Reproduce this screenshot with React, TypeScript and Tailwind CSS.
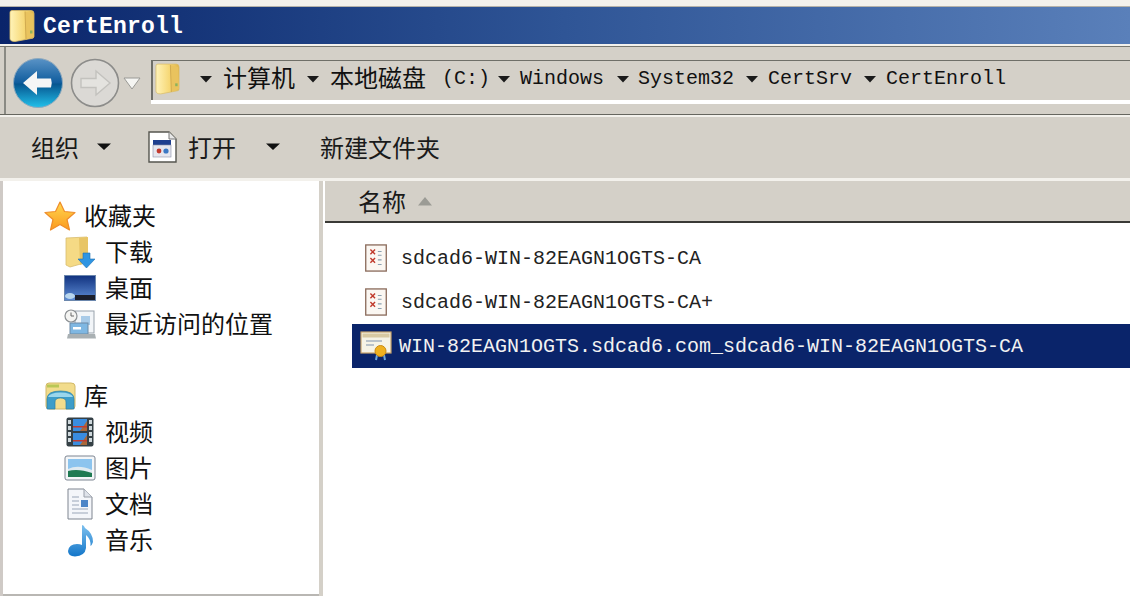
import React from 'react';

const cjk = '"Noto Sans CJK SC", sans-serif';
const fontClass = 'font-["Liberation_Mono","Noto_Sans_CJK_SC",monospace]';

const Caret = ({ className = '' }: { className?: string }) => (
  <svg width="16" height="9" viewBox="0 0 16 9" className={`shrink-0 ${className}`}>
    <path d="M1 1.5h14L8 8z" fill="#111" />
  </svg>
);

const SmallCaret = () => (
  <svg width="14" height="8" viewBox="0 0 14 8" className="shrink-0">
    <path d="M1 1h12L7 7.5z" fill="#1a1a1a" />
  </svg>
);

const Folder = ({ w, h }: { w: number; h: number }) => (
  <svg width={w} height={h} viewBox="0 0 26 33" className="shrink-0">
    <defs>
      <linearGradient id="fold" x1="0" y1="0" x2="1" y2="0">
        <stop offset="0" stopColor="#fff3b8" />
        <stop offset="0.6" stopColor="#f6d774" />
        <stop offset="1" stopColor="#e0b54a" />
      </linearGradient>
    </defs>
    <path d="M1 3 Q1 1 3 1 L22 1 Q25 1 25 4 L25 27 Q25 29 22 29 L6 32 Q1 32 1 29z" fill="url(#fold)" stroke="#d9bd6c" strokeWidth="0.8" />
    <path d="M16 2 L24 4 L25 27 L17 30z" fill="#e9c35e" />
    <path d="M16 2 L17 30" stroke="#c9a24a" strokeWidth="0.8" />
    <rect x="21" y="21" width="2.5" height="3" fill="#8db25c" />
  </svg>
);

const BackButton = () => (
  <svg width="50" height="50" viewBox="0 0 50 50" className="shrink-0">
    <defs>
      <linearGradient id="back" x1="0" y1="0" x2="0" y2="1">
        <stop offset="0" stopColor="#5a93c6" />
        <stop offset="0.5" stopColor="#0f5c9d" />
        <stop offset="0.52" stopColor="#06558f" />
        <stop offset="1" stopColor="#22c0ea" />
      </linearGradient>
    </defs>
    <circle cx="25" cy="25" r="24.5" fill="url(#back)" stroke="#8fa9bd" />
    <path d="M10 25 L24 13 L24 20.5 L38 20.5 Q39.5 25 38 29.5 L24 29.5 L24 37z" fill="#f6f6f6" />
  </svg>
);

const ForwardButton = () => (
  <svg width="50" height="50" viewBox="0 0 50 50" className="shrink-0">
    <circle cx="25" cy="25" r="23.5" fill="#dbd9d5" stroke="#8c8c8a" strokeWidth="1.6" />
    <path d="M40 25 L26 13 L26 20.5 L11 20.5 L11 29.5 L26 29.5 L26 37z" fill="#e4e3df" stroke="#c3c2be" strokeWidth="1.4" />
  </svg>
);

const OpenIcon = () => (
  <svg width="29" height="32" viewBox="0 0 29 32" className="shrink-0">
    <path d="M1 1H21L28 8V31H1z" fill="#fff" stroke="#56564f" strokeWidth="1.4" />
    <path d="M21 1V8H28" fill="#e8e8e8" stroke="#777" />
    <rect x="5" y="9" width="18" height="5" fill="#1f3f8f" />
    <rect x="5" y="14" width="18" height="12" fill="#e6e6ee" stroke="#8b8fa8" strokeWidth="0.6" />
    <circle cx="11" cy="20" r="2.4" fill="#c3392e" />
    <circle cx="18" cy="20" r="2.6" fill="#3b78c4" />
  </svg>
);

const StarIcon = () => (
  <svg width="32" height="30" viewBox="0 0 32 30" className="shrink-0">
    <defs>
      <linearGradient id="star" x1="0" y1="0" x2="0" y2="1">
        <stop offset="0" stopColor="#ffd84f" />
        <stop offset="1" stopColor="#fb9a1f" />
      </linearGradient>
    </defs>
    <path d="M16 1 L20.5 10.5 L31 11.5 L23 18.5 L25.5 29 L16 23.5 L6.5 29 L9 18.5 L1 11.5 L11.5 10.5z" fill="url(#star)" stroke="#ef8d2a" strokeWidth="1.2" strokeLinejoin="round" />
  </svg>
);

const DownloadIcon = () => (
  <svg width="30" height="32" viewBox="0 0 30 32" className="shrink-0">
    <path d="M1 2 L22 1 L23 26 L5 31 L1 29z" fill="#f5da85" stroke="#d8bd6e" strokeWidth="0.8" />
    <path d="M14 2 L23 1 L23 26 L15 29z" fill="#e8c566" />
    <path d="M18 17 H25 V23 H30 L21.5 32 L13 23 H18z" fill="#2f95e2" stroke="#1c6fb4" strokeWidth="0.6" />
  </svg>
);

const DesktopIcon = () => (
  <svg width="32" height="26" viewBox="0 0 32 26" className="shrink-0">
    <defs>
      <linearGradient id="desk" x1="0" y1="0" x2="0" y2="1">
        <stop offset="0" stopColor="#11327f" />
        <stop offset="1" stopColor="#5f8ed6" />
      </linearGradient>
    </defs>
    <rect x="0.5" y="0.5" width="31" height="25" fill="url(#desk)" stroke="#6b87ad" />
    <rect x="11" y="20" width="20" height="5" fill="#1b1f2c" />
    <ellipse cx="6" cy="21" rx="5" ry="3" fill="#b8d6ee" />
  </svg>
);

const RecentIcon = () => (
  <svg width="32" height="30" viewBox="0 0 32 30" className="shrink-0">
    <rect x="11" y="2" width="19" height="22" fill="#f2f5f8" stroke="#9aa3ad" />
    <rect x="17" y="7" width="9" height="9" fill="#a9cbe8" />
    <circle cx="7" cy="7" r="6" fill="#f4f4f2" stroke="#8b8f92" strokeWidth="1.2" />
    <path d="M7 3.5 V7 H10" fill="none" stroke="#666" />
    <rect x="6" y="14" width="18" height="11" fill="#7fb7e2" stroke="#6c8aa5" />
    <rect x="9" y="18" width="8" height="2.5" fill="#fff" />
    <path d="M4 25 H31 L32 29.5 H3z" fill="#a9b0b3" />
  </svg>
);

const LibraryIcon = () => (
  <svg width="31" height="28" viewBox="0 0 31 28" className="shrink-0">
    <path d="M1 4 Q1 1 4 1 H26 Q30 1 30 4 V24 Q30 27 27 27 H4 Q1 27 1 24z" fill="#f2dc8c" stroke="#d2b968" />
    <rect x="2" y="2.5" width="12" height="3" fill="#b9c756" />
    <path d="M2 27 V17 Q2 9 15.5 9 Q29 9 29 17 V27 H21 V20 Q21 16 15.5 16 Q10 16 10 20 V27z" fill="#3d9dc9" stroke="#2b7fa6" strokeWidth="0.7" />
    <path d="M3 15 Q5 10.5 15.5 10.5 Q26 10.5 28 15z" fill="#9ad6ec" />
  </svg>
);

const VideoIcon = () => (
  <svg width="28" height="30" viewBox="0 0 28 30" className="shrink-0">
    <rect x="0.5" y="0.5" width="27" height="29" rx="2" fill="#354046" />
    {[3, 9, 15, 21].map((y) => (
      <g key={y}>
        <rect x="2" y={y} width="3" height="4" fill="#cfd8dc" />
        <rect x="23" y={y} width="3" height="4" fill="#cfd8dc" />
      </g>
    ))}
    <rect x="7" y="2" width="14" height="12" fill="#3a8de0" />
    <rect x="7" y="16" width="14" height="12" fill="#3a8de0" />
    <path d="M14 14 L21 4 V14z M14 28 L21 18 V28z" fill="#a9683a" />
    <rect x="7" y="9" width="14" height="1.5" fill="#c23a30" />
    <rect x="7" y="23" width="14" height="1.5" fill="#c23a30" />
  </svg>
);

const PictureIcon = () => (
  <svg width="32" height="26" viewBox="0 0 32 26" className="shrink-0">
    <rect x="1" y="1" width="30" height="24" rx="2" fill="#f4f6f8" stroke="#7d8592" />
    <rect x="4" y="4" width="24" height="18" fill="#8cc4ee" />
    <path d="M4 14 Q14 9 28 15 V22 H4z" fill="#dfeaf0" />
    <path d="M4 16 Q14 13 28 18 V22 H4z" fill="#1f7a52" />
  </svg>
);

const DocIcon = () => (
  <svg width="26" height="32" viewBox="0 0 26 32" className="shrink-0">
    <path d="M1 1H17L25 9V31H1z" fill="#f4f6fa" stroke="#7f8590" />
    <path d="M17 1V9H25" fill="#dfe3ea" stroke="#9aa0aa" />
    <path d="M5 9H12M5 13H12M5 17H12M5 21H21M5 25H21" stroke="#9aa6b8" strokeWidth="1.2" />
    <rect x="14" y="12" width="7" height="7" fill="#4d85c7" />
  </svg>
);

const MusicIcon = () => (
  <svg width="27" height="33" viewBox="0 0 27 33" className="shrink-0">
    <defs>
      <linearGradient id="note" x1="0" y1="0" x2="0" y2="1">
        <stop offset="0" stopColor="#7cc0ee" />
        <stop offset="1" stopColor="#1376c9" />
      </linearGradient>
    </defs>
    <path d="M15 1 Q17 1 18 4 Q26 9 26 18 Q25 21 23.5 22 Q24 15 19 11 V24 Q18 32 8 32.5 Q1 32 1 27 Q2 20 10 20 Q13 20 15 21z" fill="url(#note)" />
  </svg>
);

const RegIcon = () => (
  <svg width="24" height="28" viewBox="0 0 24 30" className="shrink-0">
    <rect x="1" y="1" width="22" height="28" fill="#fbf7f2" stroke="#8a6a5a" strokeWidth="1.4" />
    <path d="M6 6 L11 11 M11 6 L6 11 M6 15 L11 20 M11 15 L6 20" stroke="#c0392b" strokeWidth="1.5" />
    <path d="M14 8H18M14 12H18M14 17H18M14 22H18" stroke="#8aa0b0" strokeWidth="1.2" />
  </svg>
);

const CertIcon = () => (
  <svg width="32" height="30" viewBox="0 0 32 30" className="shrink-0">
    <rect x="1" y="1" width="30" height="21" fill="#f6f3e6" stroke="#c9a36a" strokeWidth="1.2" />
    <rect x="2.5" y="2.5" width="27" height="4" fill="#d8c9a2" />
    <path d="M6 10H22M6 14H14" stroke="#7f92ab" strokeWidth="1.2" />
    <path d="M17 24 L16 29 M24 24 L25 29" stroke="#6fa8dc" strokeWidth="2" />
    <circle cx="20.5" cy="20" r="5.5" fill="#efb01f" stroke="#c98a12" />
  </svg>
);

const NavRow = ({ icon, label, top }: { icon: React.ReactNode; label: string; top?: boolean }) => (
  <div className={`flex h-9 items-center ${top ? 'pl-[41px]' : 'pl-[61px]'}`}>
    <div className="flex w-[32px] justify-center">{icon}</div>
    <span className={`pb-[2px] text-[24px] leading-none text-[#111] ${top ? 'ml-[8px]' : 'ml-[9px]'}`} style={{ fontFamily: cjk }}>
      {label}
    </span>
  </div>
);

const Crumb = ({ children, ml }: { children: React.ReactNode; ml: string }) => (
  <span className={`whitespace-pre text-[20px] leading-none text-[#111] ${ml}`}>{children}</span>
);

const Zh = ({ children }: { children: React.ReactNode }) => (
  <span className="text-[24px]" style={{ fontFamily: cjk }}>
    {children}
  </span>
);

const App: React.FC = () => {
  return (
    <div className={`flex h-[596px] w-[1130px] flex-col overflow-hidden bg-[#d4d0c8] ${fontClass}`}>
      {/* window top edge */}
      <div className="h-[7px] shrink-0 border-b border-[#b5b2aa] bg-[#f3f1ec]" />
      <div className="flex h-[37px] shrink-0 items-center bg-gradient-to-r from-[#0a246a] via-[#2f5596] to-[#5a80ba] pl-[9px]">
        <Folder w={26} h={34} />
        <span className="ml-[8px] pt-[3px] text-[23px] font-bold leading-none tracking-[0.2px] text-white">CertEnroll</span>
      </div>
      <div className="h-[3px] shrink-0 border-b border-[#77776f] bg-[#f3f1ec]" />

      {/* address bar */}
      <div className="h-[68px] shrink-0 border-b border-[#66665f] pl-[4px]">
        <div className="flex h-full items-start border-l-2 border-[#8a8a84] pl-[7px]">
          <div className="mt-[11px] flex items-center">
            <BackButton />
            <div className="ml-[7px]">
              <ForwardButton />
            </div>
            <svg width="18" height="13" viewBox="0 0 18 13" className="ml-[3px] shrink-0">
              <path d="M1 1H17L9 12z" fill="#f5f5f2" stroke="#9a9a96" />
            </svg>
          </div>
          <div className="ml-[10px] mt-[13px] flex h-[44px] flex-1 flex-col">
            <div className="flex h-[40px] items-center border-l-2 border-t border-[#6f6f68] pb-[4px] pl-[2px]">
              <Folder w={25} h={32} />
              <div className="ml-[19px]">
                <SmallCaret />
              </div>
              <Crumb ml="ml-[10px]"><Zh>计算机</Zh></Crumb>
              <div className="ml-[11px]">
                <SmallCaret />
              </div>
              <Crumb ml="ml-[10px]"><Zh>本地磁盘</Zh></Crumb>
              <Crumb ml="ml-[16px]">(C:)</Crumb>
              <div className="ml-[7px]">
                <SmallCaret />
              </div>
              <Crumb ml="ml-[9px]">Windows</Crumb>
              <div className="ml-[12px]">
                <SmallCaret />
              </div>
              <Crumb ml="ml-[8px]">System32</Crumb>
              <div className="ml-[11px]">
                <SmallCaret />
              </div>
              <Crumb ml="ml-[9px]">CertSrv</Crumb>
              <div className="ml-[11px]">
                <SmallCaret />
              </div>
              <Crumb ml="ml-[9px]">CertEnroll</Crumb>
            </div>
            <div className="h-[4px] bg-white" />
          </div>
        </div>
      </div>

      {/* toolbar */}
      <div className="h-[2px] shrink-0 bg-[#f3f1ec]" />
      <div className="flex h-[61px] shrink-0 items-center pb-[2px] pl-[31px] text-[24px] leading-none text-[#1a1a1a]" style={{ fontFamily: cjk }}>
        <span>组织</span>
        <Caret className="ml-[17px]" />
        <div className="ml-[36px]">
          <OpenIcon />
        </div>
        <span className="ml-[11px]">打开</span>
        <Caret className="ml-[29px]" />
        <span className="ml-[39px]">新建文件夹</span>
      </div>
      <div className="h-[3px] shrink-0 bg-[#f3f1ec]" />

      <div className="flex min-h-0 flex-1">
        {/* nav pane */}
        <div className="flex w-[323px] shrink-0">
          <div className="w-[3px] bg-[#cfcac6]" />
          <div className="w-[316px] border-b-2 border-[#b9b7b3] bg-white pt-[17px]">
            <NavRow top icon={<StarIcon />} label="收藏夹" />
            <NavRow icon={<DownloadIcon />} label="下载" />
            <NavRow icon={<DesktopIcon />} label="桌面" />
            <NavRow icon={<RecentIcon />} label="最近访问的位置" />
            <div className="h-9" />
            <NavRow top icon={<LibraryIcon />} label="库" />
            <NavRow icon={<VideoIcon />} label="视频" />
            <NavRow icon={<PictureIcon />} label="图片" />
            <NavRow icon={<DocIcon />} label="文档" />
            <NavRow icon={<MusicIcon />} label="音乐" />
          </div>
          <div className="w-[4px] bg-[#d4d0c8]" />
        </div>

        {/* file list */}
        <div className="flex-1 bg-white">
          <div className="ml-[2px] flex h-[42px] items-center border-b-2 border-[#3a3a36] bg-[#d4d0c8] pl-[33px]">
            <span className="text-[24px] leading-none text-[#1a1a1a]" style={{ fontFamily: cjk }}>
              名称
            </span>
            <svg width="14" height="9" viewBox="0 0 14 9" className="ml-[12px]">
              <path d="M7 0L14 8.5H0z" fill="#9b9b95" />
            </svg>
          </div>
          <div className="pt-[13px] text-[20px] leading-none text-[#222]">
            <div className="flex h-[44px] items-center pl-[41px]">
              <RegIcon />
              <span className="ml-[13px] pt-[2px]">sdcad6-WIN-82EAGN1OGTS-CA</span>
            </div>
            <div className="flex h-[44px] items-center pl-[41px]">
              <RegIcon />
              <span className="ml-[13px] pt-[2px]">sdcad6-WIN-82EAGN1OGTS-CA+</span>
            </div>
            <div className="ml-[29px] flex h-[44px] items-center bg-[#0a246a] pl-[8px] text-[#f2f2f2]">
              <CertIcon />
              <span className="ml-[7px] pt-[2px]">WIN-82EAGN1OGTS.sdcad6.com_sdcad6-WIN-82EAGN1OGTS-CA</span>
            </div>
          </div>
        </div>
      </div>
    </div>
  );
};

export default App;
